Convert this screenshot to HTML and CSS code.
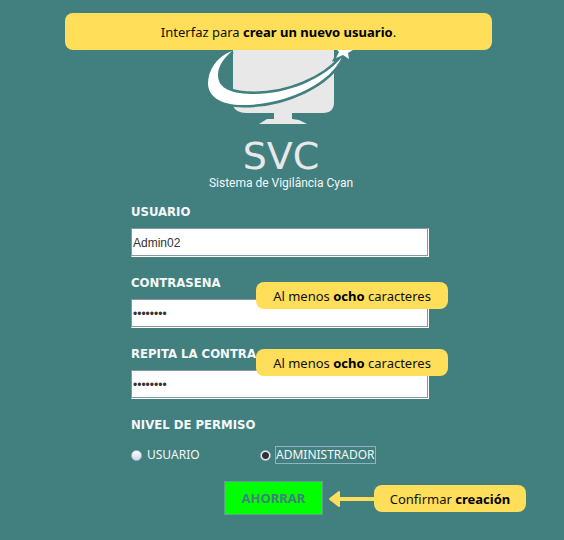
FILE: index.html
```html
<!DOCTYPE html>
<html lang="es">
<head>
<meta charset="utf-8">
<meta name="viewport" content="width=device-width, initial-scale=1">
<title>Crear un nuevo usuario</title>
<link rel="stylesheet" href="styles.css">
</head>
<body>
<p class="note banner">Interfaz para&nbsp;<b>crear un nuevo usuario</b>.</p>
<main class="page">
  <header class="brand">
    <svg class="logo" viewBox="205 38 152 88" width="152" height="88" aria-hidden="true">
      <path class="screen" d="M233 38H334V102Q334 113 323 113H292V119L299 120L307 124H259L267 119L274 119V113H246Q236 113 233 106Z"/>
      <path class="swoosh" d="M232 51C216 57 208 71 208 83C208 97 221 105 243 105C286 105 330 84 342 57C323 80 286 94 255 94C232 94 218 89 218 75C218 66 224 58 232 51Z"/>
      <path class="star" d="M345 38L347 46L356 48L348 53L349 59L343 55L336 58L339 52L334 46L341 46Z"/>
    </svg>
    <p class="name">SVC</p>
    <p class="tagline">Sistema de Vigilância Cyan</p>
  </header>
  <form class="form">
    <div class="field">
      <label class="title" for="user">USUARIO</label>
      <input class="box" id="user" type="text" value="Admin02">
    </div>
    <div class="field">
      <label class="title" for="pass">CONTRASENA</label>
      <input class="box" id="pass" type="password" value="12345678">
      <p class="note hint">Al menos&nbsp;<b>ocho</b>&nbsp;caracteres</p>
    </div>
    <div class="field">
      <label class="title" for="repeat">REPITA LA CONTRA</label>
      <input class="box" id="repeat" type="password" value="12345678">
      <p class="note hint hint-high">Al menos&nbsp;<b>ocho</b>&nbsp;caracteres</p>
    </div>
    <fieldset class="field level">
      <legend class="title">NIVEL DE PERMISO</legend>
      <div class="options">
        <label class="option"><input class="radio" type="radio" name="level"><span class="caption">USUARIO</span></label>
        <label class="option"><input class="radio" type="radio" name="level" checked><span class="caption focused">ADMINISTRADOR</span></label>
      </div>
    </fieldset>
    <div class="actions">
      <button class="save" type="button">AHORRAR</button>
      <div class="callout">
        <svg class="arrow" viewBox="0 0 46 18" width="46" height="18" aria-hidden="true">
          <path d="M10 9H46" stroke="#ffde59" stroke-width="4"/>
          <path d="M2 9L11 2V16Z" fill="#ffde59" stroke="#ffde59" stroke-width="2" stroke-linejoin="round"/>
        </svg>
        <p class="note confirm">Confirmar&nbsp;<b>creación</b></p>
      </div>
    </div>
  </form>
</main>
</body>
</html>
```
FILE: styles.css
```css
* { box-sizing: border-box; }

body {
  margin: 0;
  min-height: 100vh;
  background: #427f7f;
  color: #f4f8f8;
  font-family: "Noto Sans", "Open Sans", sans-serif;
}

p { margin: 0; }

.page {
  padding: 38px 4px 24px 0;
}

.note {
  display: flex;
  align-items: center;
  justify-content: center;
  height: 27px;
  border-radius: 8px;
  background: #ffde59;
  color: #111;
  font: 13px/20px "Noto Sans", "Open Sans", sans-serif;
  white-space: nowrap;
}

.note b { color: #000; }

.banner {
  position: absolute;
  z-index: 2;
  top: 13px;
  left: 65px;
  right: 72px;
  height: 37px;
}

.brand {
  display: flex;
  flex-direction: column;
  align-items: center;
  padding-left: 2px;
}

.logo { display: block; }
.screen { fill: #e8e8e8; }
.swoosh { fill: #fff; stroke: #427f7f; stroke-width: 5; paint-order: stroke; }
.star { fill: #fff; stroke: #427f7f; stroke-width: 4; paint-order: stroke; }

.name {
  margin-top: 10px;
  color: #e8e8e8;
  font: 38px/40px "DejaVu Sans", sans-serif;
}

.tagline {
  font: 12px/14px Roboto, sans-serif;
}

.form {
  display: flex;
  flex-direction: column;
  gap: 16px;
  max-width: 298px;
  margin: 12px auto 0;
}

.field {
  position: relative;
  display: flex;
  flex-direction: column;
  gap: 6px;
}

.title {
  padding: 0;
  font: 700 13px/20px "DejaVu Sans Condensed", "DejaVu Sans", sans-serif;
}

.box {
  width: 100%;
  height: 29px;
  padding: 0 1px;
  border: 1px solid #fff;
  border-top-color: #8797a6;
  border-left-color: #8797a6;
  border-radius: 0;
  outline: 0;
  background: #fff;
  box-shadow: inset -1px -1px #8797a6;
  color: #333;
  font: 12px "Liberation Sans", sans-serif;
}

.hint {
  position: absolute;
  top: 9px;
  left: 125px;
  width: 192px;
}

.hint-high { top: 5px; }

.level {
  display: block;
  min-width: 0;
  margin: 0;
  padding: 0;
  border: 0;
}

.options {
  display: grid;
  grid-template-columns: 129px 1fr;
  margin-top: 10px;
}

.option {
  display: flex;
  align-items: center;
  gap: 4px;
  height: 20px;
  font-size: 12px;
  line-height: 16px;
}

.radio {
  appearance: none;
  flex: none;
  width: 11px;
  height: 11px;
  margin: 0;
  border: 1px solid #a9b8cc;
  border-radius: 50%;
  background: linear-gradient(#fff, #cfdbea);
}

.radio:checked {
  background: radial-gradient(circle, #333 0 3px, #eef3f8 4px);
}

.caption { border: 1px solid transparent; }
.focused { border-color: #8fb3c4; }

.actions {
  position: relative;
  align-self: flex-start;
  margin-left: 93px;
}

.save {
  display: block;
  width: 99px;
  height: 34px;
  padding: 0;
  border: 1px solid #5f9f8f;
  background: #0f0;
  color: #427f7f;
  font: 700 13px "Noto Sans", sans-serif;
}

.callout {
  position: absolute;
  top: 4px;
  left: 104px;
  display: flex;
  align-items: center;
}

.arrow { flex: none; }
.confirm { width: 152px; }
```
